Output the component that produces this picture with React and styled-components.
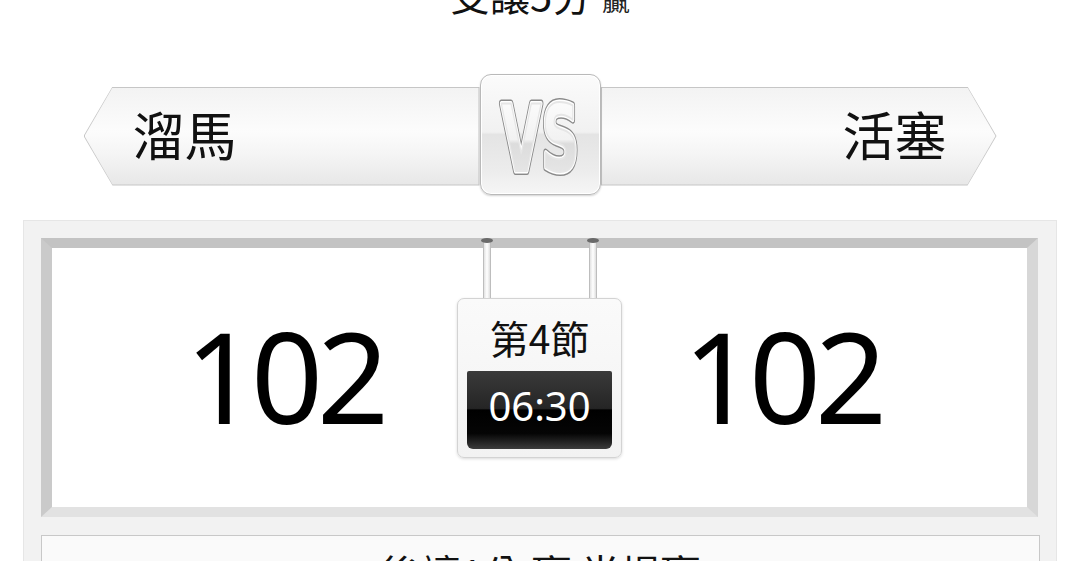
import React from "react";
import styled, { createGlobalStyle } from "styled-components";

const GlobalStyle = createGlobalStyle`
  html, body {
    margin: 0;
    padding: 0;
    background: #ffffff;
    overflow: hidden;
  }
  body {
    font-family: "Noto Sans", "Noto Sans CJK TC", sans-serif;
    color: #111;
  }
`;

const Page = styled.div`
  width: 1080px;
  height: 561px;
  overflow: hidden;
`;

const OddsLine = styled.div`
  margin-top: -25px;
  height: 39px;
  text-align: center;
  font-family: "Noto Sans CJK TC", sans-serif;
  font-size: 40px;
  line-height: 39px;
  color: #111;

  small {
    font-size: 28px;
    margin-left: 10px;
    color: #222;
  }
`;

const Banner = styled.div`
  width: 913px;
  height: 121px;
  margin: 60px auto 0;
  display: flex;
  align-items: center;
`;

const leftShape = (a) =>
  `polygon(0 50%, ${a}px 0, 100% 0, 100% 100%, ${a}px 100%)`;
const rightShape = (a) =>
  `polygon(0 0, calc(100% - ${a}px) 0, 100% 50%, calc(100% - ${a}px) 100%, 0 100%)`;

const Tab = styled.div`
  flex: 1;
  height: 99px;
  margin-top: 3px;
  padding: 1px;
  box-sizing: border-box;
  display: flex;
  background: #c6c6c6;
  clip-path: ${(p) => (p.$side === "left" ? leftShape(29) : rightShape(29))};
`;

const TabFace = styled.div`
  flex: 1;
  display: flex;
  align-items: center;
  justify-content: ${(p) => (p.$side === "left" ? "flex-start" : "flex-end")};
  padding: ${(p) => (p.$side === "left" ? "0 0 6px 48px" : "0 49px 6px 0")};
  background: linear-gradient(#f3f3f3, #fcfcfc 45%, #f4f4f4 70%, #e7e7e7);
  clip-path: ${(p) => (p.$side === "left" ? leftShape(28) : rightShape(28))};
  font-family: "Noto Sans CJK TC", sans-serif;
  font-size: 52px;
  color: #111;
`;

const VsBox = styled.div`
  width: 121px;
  height: 121px;
  box-sizing: border-box;
  border: 1px solid #b9b9b9;
  border-radius: 11px;
  background: linear-gradient(
    #fbfbfb,
    #f1f1f1 48%,
    #e4e4e4 50%,
    #ececec 80%,
    #f6f6f6
  );
  box-shadow: 0 1px 2px rgba(0, 0, 0, 0.18), inset 0 0 0 1px #fff;
  display: flex;
  align-items: center;
  justify-content: center;
  position: relative;
  z-index: 1;
`;

const Panel = styled.div`
  margin: 25px 23px 0;
  padding: 17px 18px 0 17px;
  background: #f2f2f2;
  border: 1px solid #e6e6e6;
  border-bottom: none;
  height: 400px;
`;

const Frame = styled.div`
  height: 279px;
  box-sizing: border-box;
  border-style: solid;
  border-width: 10px 11px 10px 11px;
  border-color: #c3c3c3 #d7d7d7 #e2e2e2 #cacaca;
  background: #fff;
  display: flex;
  align-items: center;
  justify-content: center;
  gap: 38px;
`;

const Score = styled.div`
  width: 260px;
  text-align: center;
  font-family: "Noto Sans", sans-serif;
  font-size: 126px;
  line-height: 1;
  letter-spacing: -6px;
  padding-right: ${(p) => (p.$side === "left" ? "10px" : "16px")};
  padding-bottom: 6px;
  box-sizing: border-box;
  color: #000;
`;

const ClockWrap = styled.div`
  width: 165px;
  display: flex;
  flex-direction: column;
  margin-top: -58px;
`;

const Rods = styled.div`
  height: 58px;
  display: flex;
  justify-content: space-between;
  padding: 0 25px 0 26px;
`;

const Rod = styled.div`
  width: 8px;
  height: 58px;
  box-sizing: border-box;
  border-left: 1px solid #bdbdbd;
  border-right: 1px solid #bdbdbd;
  background: linear-gradient(90deg, #e2e2e2, #ffffff 50%, #dedede);
  position: relative;

  &::before {
    content: "";
    position: absolute;
    top: -2px;
    left: -3px;
    width: 12px;
    height: 5px;
    border-radius: 50%;
    background: #6a6a6a;
  }
`;

const ClockCard = styled.div`
  height: 160px;
  box-sizing: border-box;
  border: 1px solid #d3d3d3;
  border-radius: 7px;
  background: linear-gradient(#fafafa, #f2f2f2);
  box-shadow: 0 1px 3px rgba(0, 0, 0, 0.15);
  padding: 0 9px 8px;
  display: flex;
  flex-direction: column;
`;

const Period = styled.div`
  height: 72px;
  display: flex;
  align-items: center;
  justify-content: center;
  font-family: "Noto Sans CJK TC", sans-serif;
  font-size: 39px;
  color: #111;
  padding-top: 4px;
  box-sizing: border-box;
`;

const Display = styled.div`
  flex: 1;
  border-radius: 2px 2px 6px 6px;
  background: linear-gradient(
    #3a3a3a,
    #252525 48%,
    #000 50%,
    #050505 80%,
    #3c3c3c
  );
  display: flex;
  align-items: center;
  justify-content: center;
  font-family: "Noto Sans", sans-serif;
  font-size: 40px;
  color: #fff;
  padding-bottom: 8px;
`;

const NoteBox = styled.div`
  margin-top: 18px;
  margin-right: -2px;
  height: 120px;
  box-sizing: border-box;
  border: 1px solid #c8c8c8;
  background: #fafafa;
  padding-top: 16px;
  text-align: center;
  font-family: "Noto Sans CJK TC", sans-serif;
  font-size: 40px;
  line-height: 40px;
  color: #111;
`;

function VsMark() {
  const common = {
    x: "50",
    y: "81",
    textAnchor: "middle",
    textLength: "78",
    lengthAdjust: "spacingAndGlyphs",
    fontFamily: "DejaVu Sans",
    fontWeight: "bold",
    fontSize: "92",
    strokeLinejoin: "round",
  };
  return (
    <svg width="100" height="90" viewBox="0 0 100 90">
      <defs>
        <linearGradient id="vsFill" x1="0" y1="0" x2="0" y2="1">
          <stop offset="0" stopColor="#ffffff" />
          <stop offset="0.5" stopColor="#f2f2f2" />
          <stop offset="0.54" stopColor="#dcdcdc" />
          <stop offset="1" stopColor="#ececec" />
        </linearGradient>
      </defs>
      <text {...common} fill="#8a8a8a" stroke="#8a8a8a" strokeWidth="8">
        VS
      </text>
      <text {...common} fill="#ffffff" stroke="#ffffff" strokeWidth="5">
        VS
      </text>
      <text {...common} fill="url(#vsFill)" stroke="#e6e6e6" strokeWidth="2">
        VS
      </text>
    </svg>
  );
}

export default function App() {
  return (
    <Page>
      <GlobalStyle />
      <OddsLine>
        受讓5分<small>贏</small>
      </OddsLine>
      <Banner>
        <Tab $side="left">
          <TabFace $side="left">溜馬</TabFace>
        </Tab>
        <VsBox>
          <VsMark />
        </VsBox>
        <Tab $side="right">
          <TabFace $side="right">活塞</TabFace>
        </Tab>
      </Banner>
      <Panel>
        <Frame>
          <Score $side="left">102</Score>
          <ClockWrap>
            <Rods>
              <Rod />
              <Rod />
            </Rods>
            <ClockCard>
              <Period>第4節</Period>
              <Display>06:30</Display>
            </ClockCard>
          </ClockWrap>
          <Score $side="right">102</Score>
        </Frame>
        <NoteBox>後讓1分 贏 半場贏</NoteBox>
      </Panel>
    </Page>
  );
}
